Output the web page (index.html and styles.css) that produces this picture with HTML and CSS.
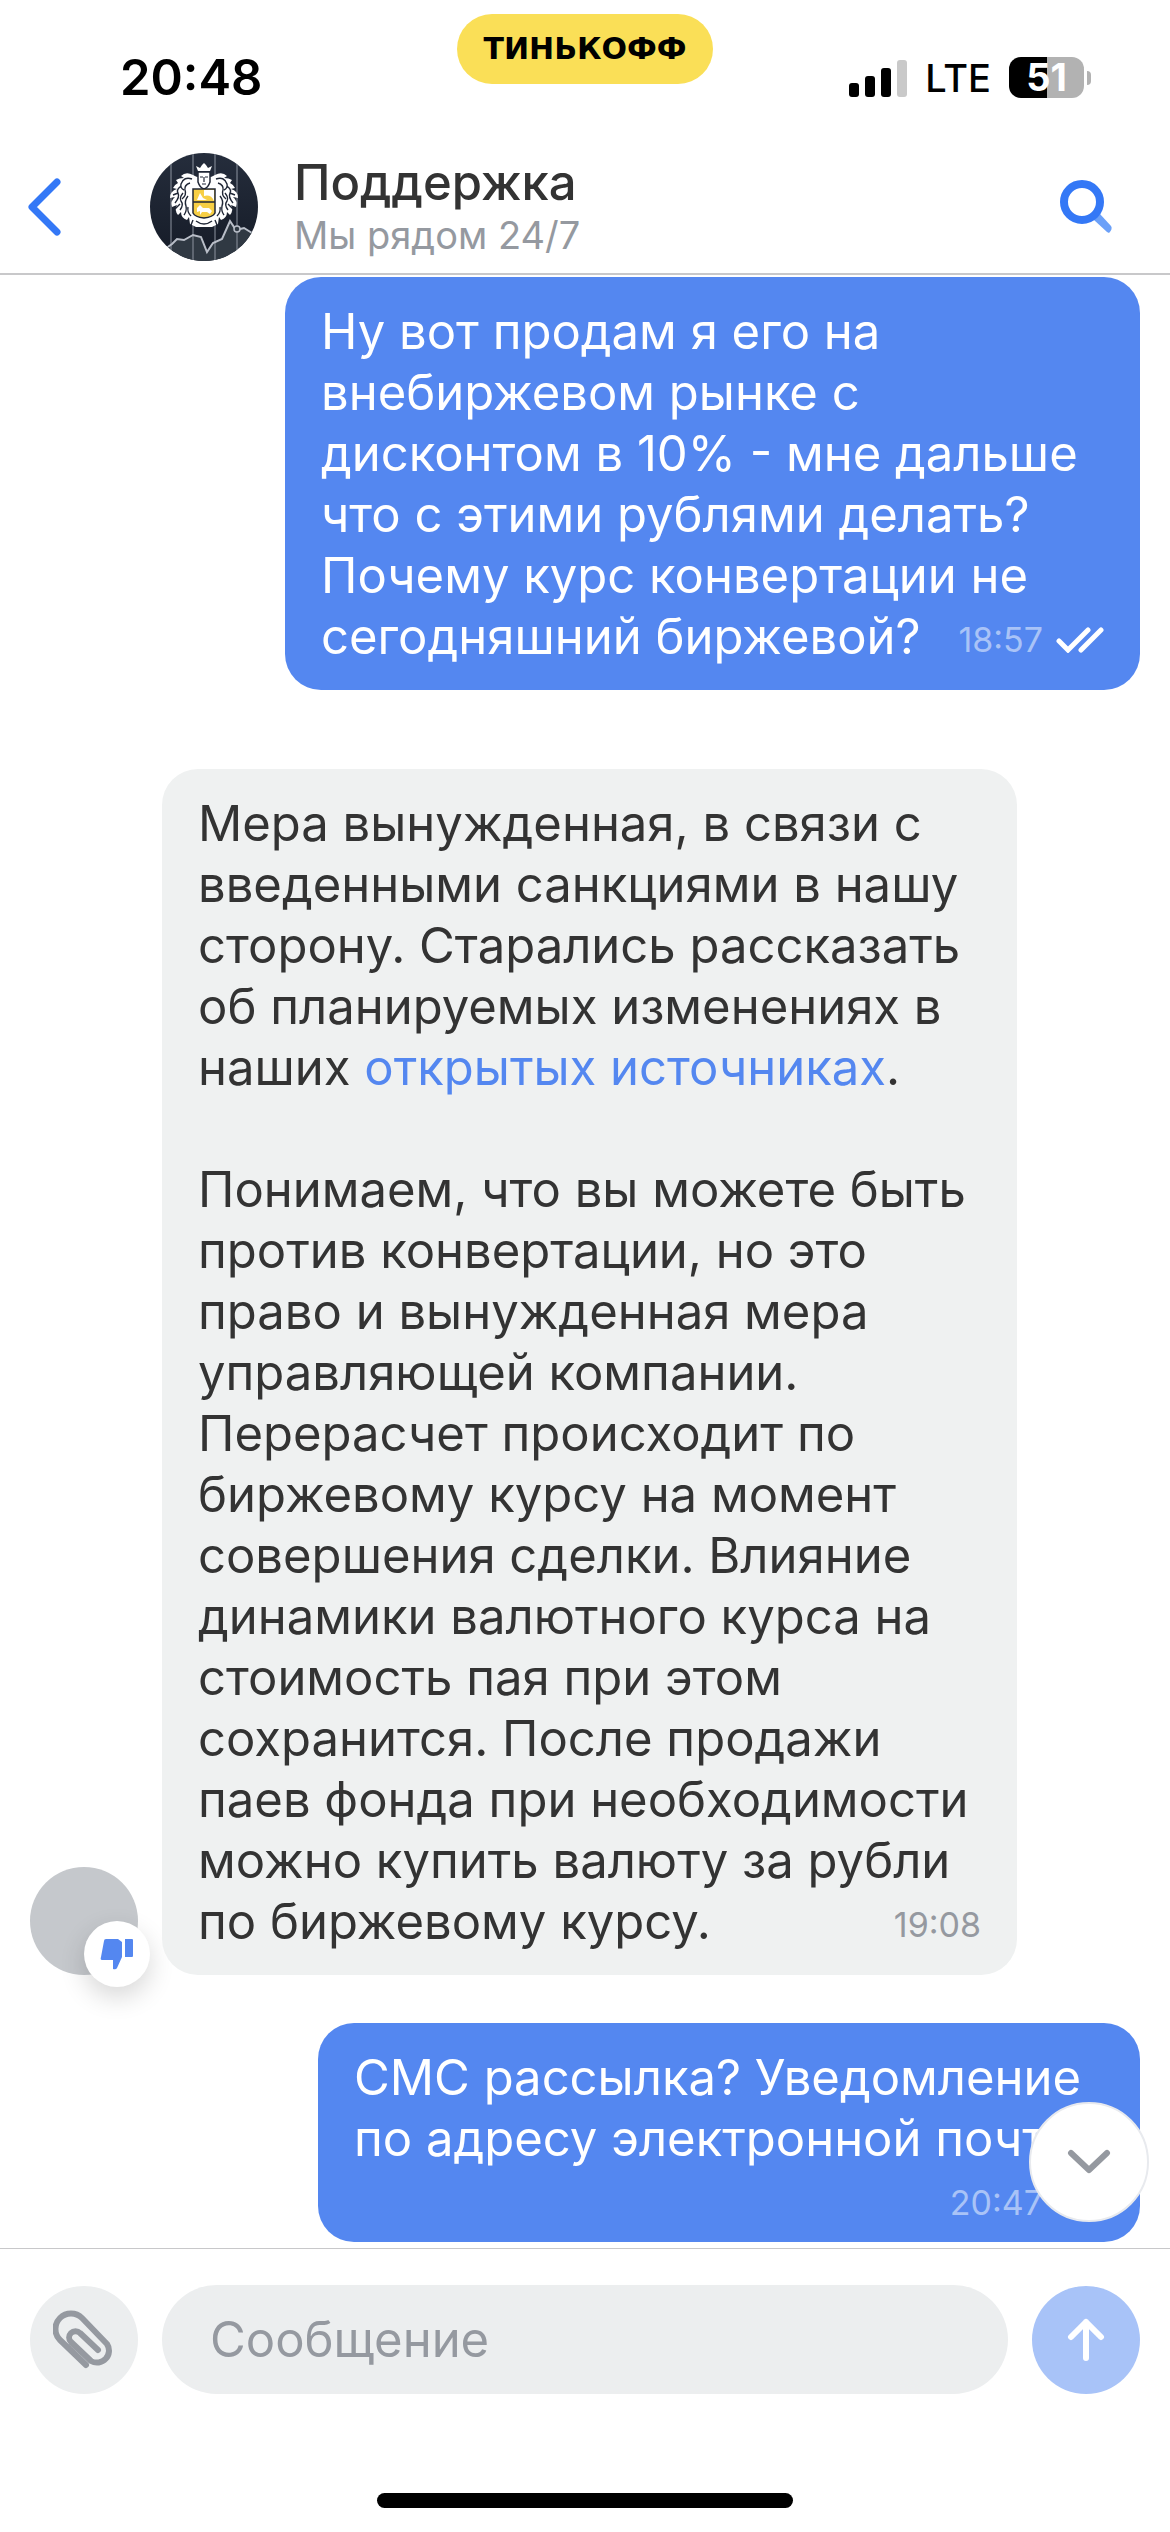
FILE: index.html
```html
<!DOCTYPE html>
<html lang="ru">
<head>
  <meta charset="UTF-8">
  <meta name="viewport" content="width=device-width, initial-scale=1.0">
  <title>Поддержка</title>
  <link rel="stylesheet" href="styles.css">
</head>
<body>

  <!-- Статус-бар -->
  <div class="status-bar">
    <div class="clock">20:48</div>
    <div class="brand">ТИНЬКОФФ</div>
    <div class="status-icons">
      <svg class="signal" width="58" height="38" viewBox="0 0 58 38">
        <rect x="0" y="24" width="10" height="14" rx="3"/>
        <rect x="16" y="17" width="10" height="21" rx="3"/>
        <rect x="32" y="9" width="10" height="29" rx="3"/>
        <rect x="48" y="1" width="10" height="37" rx="3" fill="#c9c9c9"/>
      </svg>
      <span class="network">LTE</span>
      <div class="battery"><span class="battery-level">51</span><span class="battery-tip"></span></div>
    </div>
  </div>

  <!-- Шапка чата -->
  <header class="header">
    <button class="back" aria-label="Назад">
      <svg width="34" height="60" viewBox="0 0 34 60"><path d="M29 5 L4 30 L29 55" fill="none" stroke="#3478f6" stroke-width="7" stroke-linecap="round" stroke-linejoin="round"/></svg>
    </button>
    <svg class="logo" viewBox="0 0 108 108">
      <defs>
        <clipPath id="round"><circle cx="54" cy="54" r="54"/></clipPath>
        <linearGradient id="night" x1="0" y1="0" x2="0" y2="1"><stop offset="0" stop-color="#252d3c"/><stop offset="1" stop-color="#151b27"/></linearGradient>
      </defs>
      <g clip-path="url(#round)">
        <rect width="108" height="108" fill="url(#night)"/>
        <path d="M16 96 L22 91 L27 86 L34 87 L43 82 L51 84 L57 99 L63 90 L72 86 L80 68 L86 77 L94 75 L108 82 V108 H0Z" fill="#303943"/>
        <path d="M21 0V108M43 0V108M65 0V108M87 0V108" stroke="#8d94a0" stroke-width="1"/>
        <path d="M15 96 L22 91 L27 86 L34 87 L43 82 L51 84 L57 99 L63 90 L72 86 L80 68 L86 77 L94 75 L102 80" fill="none" stroke="#b9bec8" stroke-width="2"/>
        <circle cx="87" cy="76" r="3" fill="#303943" stroke="#b9bec8" stroke-width="1.5"/>
        <!-- герб: корона, листья, щит -->
        <path d="M48 18 L46 13 L50 15 L52 12 L54 10 L56 12 L58 15 L62 13 L60 18Z" fill="#fff"/>
        <g id="leaves">
          <path d="M54 24 Q47 25 43 22 Q36 18 31 23 L34 25 Q29 25 26 27 L28 30 Q24 32 23 35 L27 36 Q20 38 20 45 L25 44 Q20 48 22 54 L27 52 Q24 57 28 62 L31 59 Q31 65 37 67 L39 64 L40 71 L46 74 L54 74Z" fill="#fff"/>
          <path d="M42 26 Q34 23 31 31 Q30 35 34 37M40 30 Q34 32 35 37 Q37 42 32 46M31 33 Q26 37 28 40 Q30 44 25 50M33 40 Q29 45 31 48 Q34 52 30 57M38 43 Q34 48 36 53 Q37 58 34 62M41 63 Q37 59 38 54M43 67 L41 72M23 42 L28 40M25 56 L30 51M46 68 Q50 71 54 71" fill="none" stroke="#202736" stroke-width="1.4"/>
        </g>
        <use href="#leaves" transform="translate(108 0) scale(-1 1)"/>
        <path d="M48 19h12v10q-2 6 -6 7q-4 -1 -6 -7Z" fill="#fff" stroke="#202736" stroke-width="1.5"/>
        <path d="M50 24h3M55 24h3M54 24v5M52 31h4" fill="none" stroke="#202736" stroke-width="1.2"/>
        <path d="M43 36h22v24q-2 4 -11 5q-9 -1 -11 -5Z" fill="#f7cf45" stroke="#202736" stroke-width="1.5"/>
        <path d="M43 49h22" stroke="#202736" stroke-width="1.5"/>
        <path d="M54 37h10v11q-3 -7 -10 -5ZM47 47l3 -7 3 5 4 2ZM47 55l3 -3 3 3h6l3 3 -2 3 -3 -2h-5l-2 3 0 -4 -3 1Z" fill="#fff"/>
      </g>
    </svg>
    <div class="contact">
      <h1 class="contact-name">Поддержка</h1>
      <div class="contact-status">Мы рядом 24/7</div>
    </div>
    <button class="search" aria-label="Поиск">
      <svg width="56" height="56" viewBox="0 0 56 56">
        <path d="M34 41 L40 35 L51 47 Q53 50 49 54 L47 53Z" fill="#6ba0f8"/>
        <circle cx="22" cy="23" r="18" fill="none" stroke="#3478f6" stroke-width="8"/>
      </svg>
    </button>
  </header>

  <!-- Переписка -->
  <main class="chat">
    <div class="message out">
      <p class="text">Ну вот продам я его на<br>внебиржевом рынке с<br>дисконтом в 10% - мне дальше<br>что с этими рублями делать?<br>Почему курс конвертации не<br>сегодняшний биржевой?</p>
      <div class="meta">
        <time>18:57</time>
        <svg width="48" height="26" viewBox="0 0 48 26"><path d="M3 14 L12 23 L32 3 M25 23 L45 3" fill="none" stroke="#fff" stroke-width="5" stroke-linecap="round"/></svg>
      </div>
    </div>

    <div class="message-row">
      <div class="avatar">
        <button class="dislike" aria-label="Не нравится">
          <svg width="34" height="32" viewBox="0 0 34 32"><path d="M6 1 H18 L22 4 V19 L17 30 Q16 32 13 31 V22 H2 Q0 22 1 19 L4 3 Q4 1 6 1Z M25 1 H32 Q33 1 33 2 V18 Q33 19 32 19 H25Z" fill="#5487f0"/></svg>
        </button>
      </div>
      <div class="message in">
        <p class="text">Мера вынужденная, в связи с<br>введенными санкциями в нашу<br>сторону. Старались рассказать<br>об планируемых изменениях в<br>наших <a href="#">открытых источниках</a>.<br><br>Понимаем, что вы можете быть<br>против конвертации, но это<br>право и вынужденная мера<br>управляющей компании.<br>Перерасчет происходит по<br>биржевому курсу на момент<br>совершения сделки. Влияние<br>динамики валютного курса на<br>стоимость пая при этом<br>сохранится. После продажи<br>паев фонда при необходимости<br>можно купить валюту за рубли<br>по биржевому курсу.</p>
        <div class="meta"><time>19:08</time></div>
      </div>
    </div>

    <div class="message out last">
      <p class="text">СМС рассылка? Уведомление<br>по адресу электронной почты?</p>
      <div class="meta">
        <time>20:47</time>
        <svg width="48" height="26" viewBox="0 0 48 26"><path d="M3 14 L12 23 L32 3 M25 23 L45 3" fill="none" stroke="#fff" stroke-width="5" stroke-linecap="round"/></svg>
      </div>
    </div>

    <button class="scroll-down" aria-label="Вниз">
      <svg width="44" height="26" viewBox="0 0 44 26"><path d="M4 4 L22 21 L40 4" fill="none" stroke="#9599a0" stroke-width="6" stroke-linecap="round" stroke-linejoin="round"/></svg>
    </button>
  </main>

  <!-- Поле ввода -->
  <form class="composer">
    <button type="button" class="round-button" aria-label="Прикрепить файл">
      <svg width="62" height="62" viewBox="0 0 62 62"><path d="M33 56 L7 31 A15 15 0 0 1 29 9 L54 35 A12 12 0 0 1 38 52 L18 33 A6 6 0 0 1 27 24 L45 41" fill="none" stroke="#9599a0" stroke-width="6" stroke-linecap="round" stroke-linejoin="round"/></svg>
    </button>
    <input class="field" type="text" placeholder="Сообщение" aria-label="Сообщение">
    <button type="button" class="round-button send" aria-label="Отправить">
      <svg width="38" height="44" viewBox="0 0 38 44"><path d="M19 40 V4 M4 19 L19 4 L34 19" fill="none" stroke="#fff" stroke-width="6" stroke-linecap="round" stroke-linejoin="round"/></svg>
    </button>
  </form>
  <div class="home-bar"></div>

</body>
</html>
```

FILE: styles.css
```css
* {
  box-sizing: border-box;
}

body {
  margin: 0;
  min-height: 100vh;
  display: flex;
  flex-direction: column;
  background: #fff;
  color: #333;
  font-family: Inter, "Liberation Sans", sans-serif;
}

button {
  padding: 0;
  border: none;
  background: none;
  display: flex;
  align-items: center;
  justify-content: center;
  cursor: pointer;
}

svg {
  display: block;
  flex-shrink: 0;
}

.status-bar {
  height: 141px;
  display: grid;
  grid-template-columns: 1fr auto 1fr;
  align-items: center;
  padding: 14px 79px 0;
  color: #000;
}

.clock {
  padding-left: 41px;
  font-size: 49px;
  font-weight: 600;
}

.brand {
  align-self: start;
  height: 70px;
  padding: 0 26px;
  border-radius: 35px;
  background: #fadf57;
  font-family: "DejaVu Sans", sans-serif;
  font-size: 30px;
  font-weight: bold;
  line-height: 70px;
}

.status-icons {
  display: flex;
  justify-content: flex-end;
  align-items: center;
  gap: 18px;
}

.network {
  font-size: 38px;
  font-weight: 500;
}

.battery {
  display: flex;
  align-items: center;
  gap: 3px;
}

.battery-level {
  width: 75px;
  height: 41px;
  border-radius: 12px;
  background: linear-gradient(90deg, #000 51%, #b2b2b2 51%);
  color: #fff;
  font-size: 38px;
  font-weight: 700;
  line-height: 41px;
  text-align: center;
}

.battery-tip {
  width: 4px;
  height: 14px;
  border-radius: 0 4px 4px 0;
  background: #b2b2b2;
}

.header {
  height: 134px;
  display: flex;
  align-items: center;
  padding: 0 54px 0 28px;
  border-bottom: 2px solid #c8c8ca;
}

.back {
  width: 34px;
  height: 108px;
}

.logo {
  width: 108px;
  height: 108px;
  margin: 0 36px 0 88px;
}

.contact {
  flex: 1;
}

.contact-name {
  margin: 0;
  font-size: 49px;
  font-weight: 500;
  line-height: 56px;
}

.contact-status {
  color: #9599a0;
  font-size: 38px;
  line-height: 48px;
}

.chat {
  position: relative;
  flex: 1;
  display: flex;
  flex-direction: column;
  align-items: flex-end;
  padding: 2px 30px 6px;
}

.message {
  position: relative;
  padding: 24px 36px 23px;
  border-radius: 36px;
}

.text {
  margin: 0;
  font-size: 49px;
  line-height: 61px;
  white-space: nowrap;
}

.text a {
  color: #5487f0;
  text-decoration: none;
}

.out {
  width: 855px;
  background: #5487f0;
  color: #fff;
}

.in {
  width: 855px;
  background: #eff1f1;
}

.last {
  width: 822px;
  padding-bottom: 73px;
}

/* время поверх последней строки */
.meta {
  position: absolute;
  right: 36px;
  bottom: 30px;
  display: flex;
  align-items: center;
  gap: 13px;
  font-size: 34px;
  line-height: 40px;
}

.out .meta {
  color: #a9c3f7;
}

.in .meta {
  color: #9599a0;
}

.last .meta {
  bottom: 19px;
}

.message-row {
  align-self: stretch;
  display: flex;
  align-items: flex-end;
  gap: 24px;
  margin: 79px 0 48px;
}

.avatar {
  position: relative;
  width: 108px;
  height: 108px;
  border-radius: 50%;
  background: #c5c8cc;
}

.dislike {
  position: absolute;
  right: -12px;
  bottom: -12px;
  width: 66px;
  height: 66px;
  border-radius: 50%;
  background: #fff;
  box-shadow: 0 10px 26px rgba(0, 0, 0, 0.16);
}

.scroll-down {
  position: absolute;
  right: 21px;
  bottom: 26px;
  width: 120px;
  height: 120px;
  border: 2px solid #e8eaee;
  border-radius: 50%;
  background: #fff;
}

.composer {
  display: flex;
  align-items: center;
  gap: 24px;
  padding: 36px 30px 0;
  border-top: 1px solid #c8c8ca;
}

.round-button {
  flex-shrink: 0;
  width: 108px;
  height: 108px;
  border-radius: 50%;
  background: #eceeef;
}

.send {
  background: #a8c3f8;
}

.field {
  flex: 1;
  min-width: 0;
  height: 109px;
  padding: 0 48px;
  border: none;
  border-radius: 55px;
  background: #eceeef;
  color: #333;
  font-family: inherit;
  font-size: 49px;
}

.field::placeholder {
  color: #9599a0;
  opacity: 1;
}

.home-bar {
  width: 416px;
  height: 15px;
  margin: 99px auto 24px;
  border-radius: 8px;
  background: #000;
}
```
